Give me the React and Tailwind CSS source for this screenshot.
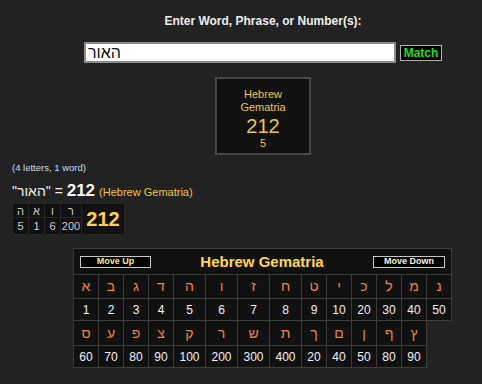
import React from 'react';

const row1 = [
  ['א', 1], ['ב', 2], ['ג', 3], ['ד', 4], ['ה', 5], ['ו', 6], ['ז', 7],
  ['ח', 8], ['ט', 9], ['י', 10], ['כ', 20], ['ל', 30], ['מ', 40], ['נ', 50],
];
const row2 = [
  ['ס', 60], ['ע', 70], ['פ', 80], ['צ', 90], ['ק', 100], ['ר', 200], ['ש', 300],
  ['ת', 400], ['ך', 20], ['ם', 40], ['ן', 50], ['ף', 80], ['ץ', 90],
];
const widths = ['w-[25px]', 'w-[25px]', 'w-[25px]', 'w-[25px]', 'w-[32px]', 'w-[32px]', 'w-[32px]', 'w-[32px]', 'w-[25px]', 'w-[25px]', 'w-[25px]', 'w-[25px]', 'w-[25px]', 'w-[25px]'];

const breakdown = [['ה', 5], ['א', 1], ['ו', 6], ['ר', 200]];

export default function App() {
  return (
    <div className="min-h-screen bg-[#222222] font-['Liberation_Sans',Arial,sans-serif] text-[#e6e6e6]">
      {/* Search */}
      <div className="flex flex-col items-center pl-[44px] pt-[14px]">
        <h1 className="text-[12px] leading-[14px] font-bold text-[#eeeeee]">
          Enter Word, Phrase, or Number(s):
        </h1>
        <div className="mt-[14px] flex items-center">
          <input
            defaultValue="האור"
            className="w-[312px] h-[21px] bg-white border-2 border-[#8c8c8c] px-[2px] text-[16px] text-[#111] outline-none font-['Liberation_Sans',Arial,sans-serif]"
          />
          <button className="ml-[4px] w-[42px] h-[16px] bg-black border border-[#b0b0b0] text-[12px] leading-[12px] font-bold text-[#22dd22]">
            Match
          </button>
        </div>
        <div className="mt-[14px] w-[96px] h-[78px] bg-[#111111] border-2 border-[#464646] flex flex-col items-center pt-[9px] text-[#e8c64a]">
          <div className="text-[11px] leading-[13px] text-center">Hebrew<br />Gematria</div>
          <div className="text-[20px] leading-[22px] mt-[1px]">212</div>
          <div className="text-[11px] leading-[13px]">5</div>
        </div>
      </div>

      {/* Result */}
      <div className="px-[12px] mt-[7px]">
        <div className="text-[9.5px] leading-[12px] text-[#c8dcec]">(4 letters, 1 word)</div>
        <div className="mt-[8px] flex items-baseline leading-[18px]">
          <span className="text-[14px] text-[#eeeeee]">"האור" =&nbsp;</span>
          <span className="text-[17px] font-bold text-white">212</span>
          <span className="text-[11px] text-[#e8c64a] ml-[4px]">(Hebrew Gematria)</span>
        </div>
        <table className="mt-[2px] border-collapse bg-[#111111] text-[11px] text-[#cccccc]">
          <tbody>
            <tr className="h-[14px]">
              {breakdown.map(([l], i) => (
                <td key={i} className={`${i === 3 ? 'w-[21px]' : 'w-[16px]'} text-center border border-[#262626] p-0 leading-[12px]`}>{l}</td>
              ))}
              <td rowSpan={2} className="w-[43px] text-center text-[20px] font-bold text-[#ffd24a] border border-[#262626] p-0">212</td>
            </tr>
            <tr className="h-[16px]">
              {breakdown.map(([, v], i) => (
                <td key={i} className="text-center border border-[#262626] p-0 leading-[14px]">{v}</td>
              ))}
            </tr>
          </tbody>
        </table>
      </div>

      {/* Chart */}
      <table className="ml-[73px] mt-[13px] border-collapse text-[12px]">
        <tbody>
          <tr className="h-[26px]">
            <td colSpan={14} className="bg-[#111111] border border-[#3c3c3c] px-[6px] py-0">
              <div className="flex items-center justify-between h-[24px]">
                <button className="w-[71px] h-[12px] bg-black border border-[#c8c8c8] text-[9px] leading-[9px] font-bold text-[#f0e68c]">Move Up</button>
                <span className="text-[15px] leading-[18px] font-bold text-[#ffd84a]">Hebrew Gematria</span>
                <button className="w-[72px] h-[12px] bg-black border border-[#c8c8c8] text-[9px] leading-[9px] font-bold text-[#f0f0e0]">Move Down</button>
              </div>
            </td>
          </tr>
          <tr className="h-[24px]">
            {row1.map(([l], i) => (
              <td key={i} className={`${widths[i]} p-0 bg-[#111111] text-center text-[14px] text-[#e8844a] border border-[#3c3c3c]`}>{l}</td>
            ))}
          </tr>
          <tr className="h-[22px]">
            {row1.map(([, v], i) => (
              <td key={i} className="p-0 bg-[#111111] text-center text-[#f2f2f2] border border-[#3c3c3c]">{v}</td>
            ))}
          </tr>
          <tr className="h-[25px]">
            {row2.map(([l], i) => (
              <td key={i} className="p-0 bg-[#111111] text-center text-[14px] text-[#e8844a] border border-[#3c3c3c]">{l}</td>
            ))}
          </tr>
          <tr className="h-[22px]">
            {row2.map(([, v], i) => (
              <td key={i} className="p-0 bg-[#111111] text-center text-[#f2f2f2] border border-[#3c3c3c]">{v}</td>
            ))}
          </tr>
        </tbody>
      </table>
    </div>
  );
}
